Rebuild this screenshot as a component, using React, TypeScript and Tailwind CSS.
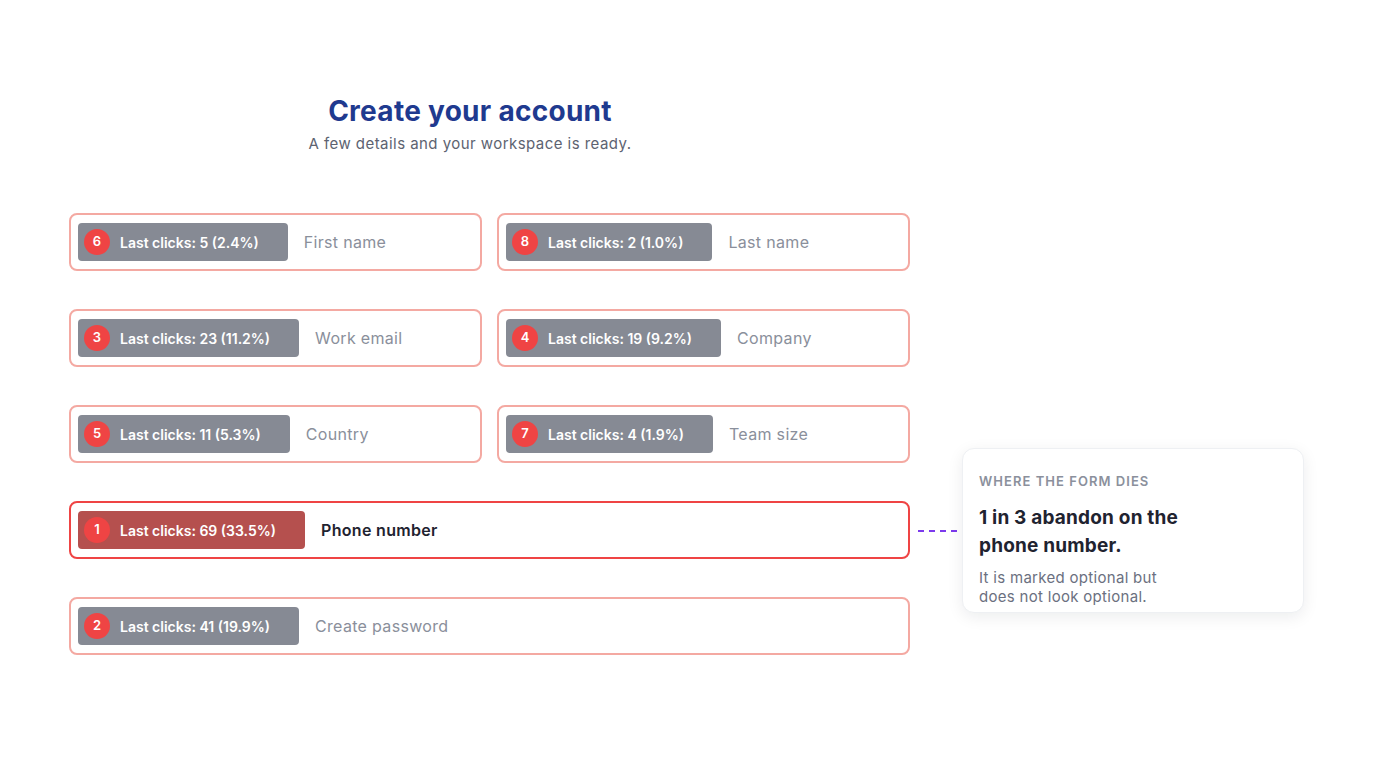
import React from "react";

type Field = { n: number; clicks: string; label: string };

const rows: Field[][] = [
  [
    { n: 6, clicks: "Last clicks: 5 (2.4%)", label: "First name" },
    { n: 8, clicks: "Last clicks: 2 (1.0%)", label: "Last name" },
  ],
  [
    { n: 3, clicks: "Last clicks: 23 (11.2%)", label: "Work email" },
    { n: 4, clicks: "Last clicks: 19 (9.2%)", label: "Company" },
  ],
  [
    { n: 5, clicks: "Last clicks: 11 (5.3%)", label: "Country" },
    { n: 7, clicks: "Last clicks: 4 (1.9%)", label: "Team size" },
  ],
];

function Badge({ n, clicks, hot }: { n: number; clicks: string; hot?: boolean }) {
  return (
    <div
      className={
        "flex items-center h-[38px] rounded-[4px] pl-[6px] pr-[29px] gap-[10px] " +
        (hot ? "bg-[#b5504e]" : "bg-[#868a94]")
      }
    >
      <span className="flex items-center justify-center w-[26px] h-[26px] rounded-full bg-[#ef4444] text-white text-[13px] font-semibold">
        {n}
      </span>
      <span className="text-white text-[14px] font-semibold whitespace-nowrap">{clicks}</span>
    </div>
  );
}

function FieldBox({ f }: { f: Field }) {
  return (
    <div className="flex items-center h-[58px] rounded-[8px] border-2 border-[#f4a9a2] bg-white pl-[7px] gap-[16px]">
      <Badge n={f.n} clicks={f.clicks} />
      <span className="text-[16px] tracking-[0.02em] text-[#8a8f9b]">{f.label}</span>
    </div>
  );
}

export default function App() {
  return (
    <div
      className="w-[1376px] h-[768px] bg-white relative overflow-hidden"
      style={{ fontFamily: "Inter, 'Noto Sans', sans-serif" }}
    >
      <div className="pl-[69px] pt-[94px]">
        <div className="w-[802px] text-center">
          <h1 className="text-[28px] leading-[34px] font-bold tracking-[0.01em] text-[#1f3a8f]">
            Create your account
          </h1>
          <p className="mt-[6px] text-[15px] leading-[20px] tracking-[0.03em] text-[#5d6371]">
            A few details and your workspace is ready.
          </p>
        </div>

        <div className="mt-[59px] w-[841px] flex flex-col gap-[38px]">
          {rows.map((r, i) => (
            <div key={i} className="grid grid-cols-2 gap-[15px]">
              {r.map((f) => (
                <FieldBox key={f.n} f={f} />
              ))}
            </div>
          ))}

          <div className="relative">
            <div className="flex items-center h-[58px] rounded-[8px] border-2 border-[#ef4444] bg-white pl-[7px] gap-[16px]">
              <Badge n={1} clicks="Last clicks: 69 (33.5%)" hot />
              <span className="text-[16px] font-semibold tracking-[0.02em] text-[#1f2330]">Phone number</span>
            </div>
            <svg className="absolute left-[849px] top-[29px]" width="44" height="2" viewBox="0 0 44 2">
              <line x1="0" y1="1" x2="44" y2="1" stroke="#7c3aed" strokeWidth="2" strokeDasharray="6 5" />
            </svg>
            <div className="absolute left-[893px] top-[-53px] w-[342px] h-[165px] rounded-[12px] bg-white border border-[#eef0f3] shadow-[0_4px_16px_rgba(15,23,42,0.08)] px-[16px] pt-[24px]">
              <div className="text-[13px] leading-[16px] font-semibold tracking-[0.08em] text-[#8b909c]">
                WHERE THE FORM DIES
              </div>
              <div className="mt-[15px] w-[240px] text-[19px] leading-[28px] font-bold tracking-[0.01em] text-[#1f2330]">
                1 in 3 abandon on the phone number.
              </div>
              <div className="mt-[8px] w-[210px] text-[15px] leading-[19px] tracking-[0.02em] text-[#6b7080]">
                It is marked optional but does not look optional.
              </div>
            </div>
          </div>

          <div className="flex items-center h-[58px] rounded-[8px] border-2 border-[#f4a9a2] bg-white pl-[7px] gap-[16px]">
            <Badge n={2} clicks="Last clicks: 41 (19.9%)" />
            <span className="text-[16px] tracking-[0.02em] text-[#8a8f9b]">Create password</span>
          </div>
        </div>
      </div>
    </div>
  );
}
